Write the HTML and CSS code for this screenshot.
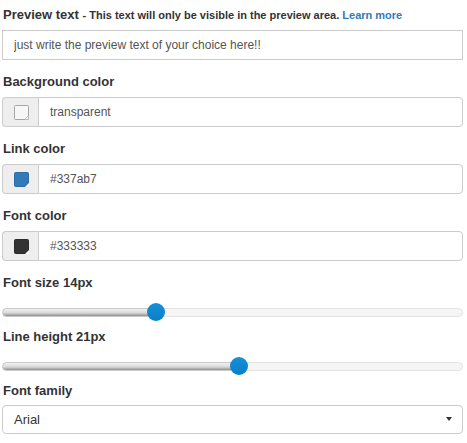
FILE: index.html
```html
<!DOCTYPE html>
<html lang="en">
<head>
  <meta charset="UTF-8">
  <title>Preview settings</title>
  <link rel="stylesheet" href="styles.css">
</head>
<body>
  <div class="settings">
    <!-- Preview text -->
    <div class="field">
      <label class="field-label">Preview text <small class="hint">- This text will only be visible in the preview area. <a href="#">Learn more</a></small></label>
      <input type="text" class="text-input plain" value="just write the preview text of your choice here!!">
    </div>

    <!-- Colors -->
    <div class="field">
      <label class="field-label">Background color</label>
      <div class="input-group">
        <span class="addon">
          <svg class="swatch" width="15" height="15" viewBox="0 0 15 15">
            <rect x="0.5" y="0.5" width="14" height="14" rx="1" fill="#f7f7f7" stroke="#a6a6a6"/>
            <polygon points="14.5,10.5 14.5,14.5 10.5,14.5" fill="#fff" stroke="#a6a6a6" stroke-width="0.6"/>
          </svg>
        </span>
        <input type="text" class="text-input" value="transparent">
      </div>
    </div>

    <div class="field">
      <label class="field-label">Link color</label>
      <div class="input-group">
        <span class="addon">
          <svg class="swatch" width="15" height="15" viewBox="0 0 15 15">
            <rect x="0.5" y="0.5" width="14" height="14" rx="1" fill="#337ab7" stroke="#2d6ea6"/>
            <polygon points="15,11 15,15 11,15" fill="#fff"/>
          </svg>
        </span>
        <input type="text" class="text-input" value="#337ab7">
      </div>
    </div>

    <div class="field">
      <label class="field-label">Font color</label>
      <div class="input-group">
        <span class="addon">
          <svg class="swatch" width="15" height="15" viewBox="0 0 15 15">
            <rect x="0.5" y="0.5" width="14" height="14" rx="1" fill="#333333" stroke="#2a2a2a"/>
            <polygon points="15,11 15,15 11,15" fill="#fff"/>
          </svg>
        </span>
        <input type="text" class="text-input" value="#333333">
      </div>
    </div>

    <!-- Sliders -->
    <div class="field slider-field">
      <label class="field-label">Font size 14px</label>
      <div class="slider">
        <div class="slider-track">
          <div class="slider-fill" style="width: 33.3%"></div>
          <span class="slider-thumb" style="left: 33.3%"></span>
        </div>
      </div>
    </div>

    <div class="field slider-field">
      <label class="field-label">Line height 21px</label>
      <div class="slider">
        <div class="slider-track">
          <div class="slider-fill" style="width: 51.4%"></div>
          <span class="slider-thumb" style="left: 51.4%"></span>
        </div>
      </div>
    </div>

    <!-- Font family -->
    <div class="field">
      <label class="field-label">Font family</label>
      <div class="select-wrap">
        <select class="select-input">
          <option>Arial</option>
          <option>Georgia</option>
          <option>Helvetica</option>
          <option>Verdana</option>
        </select>
        <span class="caret"></span>
      </div>
    </div>
  </div>
</body>
</html>
```

FILE: styles.css
```css
body {
  margin: 0;
  background-color: #fff;
  color: #333;
  font-family: "Liberation Sans", Arial, sans-serif;
}
.settings {
  padding: 5px 4px 0 2px;
}
.field {
  margin-bottom: 12px;
}
.field-label {
  display: block;
  padding-left: 1px;
  margin-bottom: 5px;
  font-size: 13px;
  font-weight: bold;
  line-height: 20px;
}
.hint {
  font-size: 11px;
}
.hint a {
  color: #337ab7;
  text-decoration: none;
}
.text-input {
  display: block;
  box-sizing: border-box;
  width: 100%;
  height: 30px;
  padding: 0 11px;
  border: 1px solid #ccc;
  border-radius: 0 4px 4px 0;
  background-color: #fff;
  color: #555;
  font-family: inherit;
  font-size: 12px;
  outline: none;
}
.text-input.plain {
  border-radius: 0;
}
/* Color picker rows: swatch addon + text field */
.input-group {
  display: flex;
}
.addon {
  flex: 0 0 36px;
  display: flex;
  align-items: center;
  justify-content: center;
  box-sizing: border-box;
  height: 30px;
  padding-left: 1px;
  border: 1px solid #ccc;
  border-right: none;
  border-radius: 4px 0 0 4px;
  background-color: #eee;
}
.input-group .text-input {
  flex: 1;
  min-width: 0;
}
.swatch {
  display: block;
}
/* Sliders */
.slider-field {
  margin-bottom: 1px;
}
.slider {
  height: 28px;
  display: flex;
  align-items: center;
}
.slider-track {
  position: relative;
  box-sizing: border-box;
  width: 100%;
  height: 9px;
  border: 1px solid #e3e3e3;
  border-radius: 5px;
  background-color: #f5f5f5;
}
.slider-fill {
  height: 100%;
  margin: -1px 0 0 -1px;
  border: 1px solid #c9c9c9;
  border-radius: 5px 0 0 5px;
  background: linear-gradient(#f2f2f2, #d9d9d9 55%, #8f8f8f);
}
.slider-thumb {
  position: absolute;
  top: 50%;
  width: 18px;
  height: 18px;
  border-radius: 50%;
  background: linear-gradient(#1590d8, #0a7fc6);
  transform: translate(-50%, -50%);
}
/* Select */
.select-wrap {
  position: relative;
}
.select-input {
  display: block;
  box-sizing: border-box;
  width: 100%;
  height: 29px;
  margin-top: -1px;
  padding: 0 11px;
  border: 1px solid #ccc;
  border-radius: 4px;
  background-color: #fff;
  color: #333;
  font-family: inherit;
  font-size: 13px;
  appearance: none;
  -webkit-appearance: none;
  outline: none;
}
.caret {
  position: absolute;
  right: 11px;
  top: 12px;
  width: 0;
  height: 0;
  border-top: 4px solid #333;
  border-left: 3px solid transparent;
  border-right: 3px solid transparent;
}
```
